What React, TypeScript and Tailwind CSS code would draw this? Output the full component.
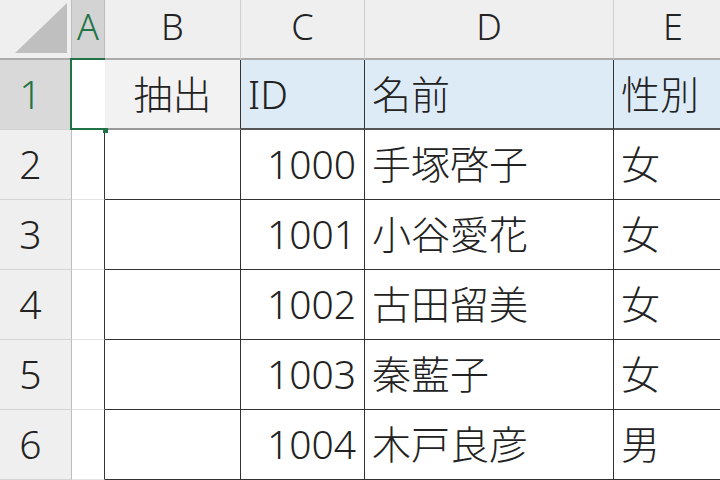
import React from "react";

const FONT = {
  fontFamily: '"Noto Sans", "Noto Sans CJK JP", sans-serif',
};

type Row = { n: number; id: string; name: string; sex: string };

const rows: Row[] = [
  { n: 2, id: "1000", name: "手塚啓子", sex: "女" },
  { n: 3, id: "1001", name: "小谷愛花", sex: "女" },
  { n: 4, id: "1002", name: "古田留美", sex: "女" },
  { n: 5, id: "1003", name: "秦藍子", sex: "女" },
  { n: 6, id: "1004", name: "木戸良彦", sex: "男" },
];

function ColHead({ label, w, last }: { label: string; w: string; last?: boolean }) {
  return (
    <div
      className={`${w} shrink-0 h-full flex items-center justify-center bg-[#efefef] text-[36px] text-[#222] border-b-2 border-b-[#ababab] ${
        last ? "" : "border-r border-r-[#d0d0d0]"
      }`}
    >
      <span className="-mt-[4px]">{label}</span>
    </div>
  );
}

export default function App() {
  return (
    <div className="w-[720px] h-[480px] overflow-hidden bg-white font-light" style={FONT}>
      <div className="w-[732px]">
        {/* column header strip */}
        <div className="flex h-[60px]">
          <div className="w-[72px] shrink-0 h-full bg-[#efefef] border-r border-r-[#bdbdbd] border-b-2 border-b-[#ababab]">
            <svg width="71" height="58" viewBox="0 0 71 58">
              <polygon points="15,53 67,53 67,3" fill="#bfbfbf" />
            </svg>
          </div>
          <div className="w-[33px] shrink-0 h-full flex items-center justify-center bg-[#d3d3d3] text-[36px] text-[#217346] border-r border-r-[#bdbdbd] border-b-2 border-b-[#ababab]">
            <span className="-mt-[4px]">A</span>
          </div>
          <ColHead label="B" w="w-[136px]" />
          <ColHead label="C" w="w-[124px]" />
          <ColHead label="D" w="w-[249px]" />
          <ColHead label="E" w="w-[118px]" last />
        </div>

        {/* row 1: headings of the list */}
        <div className="flex h-[70px] text-[39px] text-[#222]">
          <div className="w-[72px] shrink-0 h-full flex items-center justify-center pr-[10px] bg-[#d9d9d9] text-[#217346] border-r border-r-[#b0b0b0] border-b border-b-[#d0d0d0]">
            1
          </div>
          <div className="w-[33px] shrink-0 h-full relative bg-white">
            <div className="absolute -left-[2px] -top-[2px] w-[35px] h-[72px] border-l-2 border-t-2 border-b-2 border-[#217346]" />
            <div className="absolute right-[-3px] bottom-[-3px] w-[5px] h-[5px] bg-[#217346]" />
          </div>
          <div className="w-[136px] shrink-0 h-full flex items-center justify-center bg-[#f2f2f2] border-r border-r-[#333] border-b-2 border-b-[#9a9a9a]">
            抽出
          </div>
          <div className="w-[124px] shrink-0 h-full flex items-center pl-[7px] bg-[#ddebf7] border-r border-r-[#333] border-b-2 border-b-[#555]">
            ID
          </div>
          <div className="w-[249px] shrink-0 h-full flex items-center pl-[7px] bg-[#ddebf7] border-r border-r-[#333] border-b-2 border-b-[#555]">
            名前
          </div>
          <div className="w-[118px] shrink-0 h-full flex items-center pl-[7px] bg-[#ddebf7] border-b-2 border-b-[#555]">
            性別
          </div>
        </div>

        {/* data rows */}
        {rows.map((r) => (
          <div key={r.n} className="flex h-[70px] text-[39px] text-[#222]">
            <div className="w-[72px] shrink-0 h-full flex items-center justify-center pr-[10px] bg-[#efefef] border-r border-r-[#bdbdbd] border-b border-b-[#d4d4d4]">
              {r.n}
            </div>
            <div className="w-[33px] shrink-0 h-full bg-white border-r border-r-[#333] border-b border-b-[#e2e2e2]" />
            <div className="w-[136px] shrink-0 h-full bg-white border-r border-r-[#333] border-b border-b-[#333]" />
            <div className="w-[124px] shrink-0 h-full flex items-center justify-end pr-[8px] bg-white border-r border-r-[#333] border-b border-b-[#333]">
              {r.id}
            </div>
            <div className="w-[249px] shrink-0 h-full flex items-center pl-[7px] bg-white border-r border-r-[#333] border-b border-b-[#333]">
              {r.name}
            </div>
            <div className="w-[118px] shrink-0 h-full flex items-center pl-[7px] bg-white border-b border-b-[#333]">
              {r.sex}
            </div>
          </div>
        ))}
      </div>
    </div>
  );
}
